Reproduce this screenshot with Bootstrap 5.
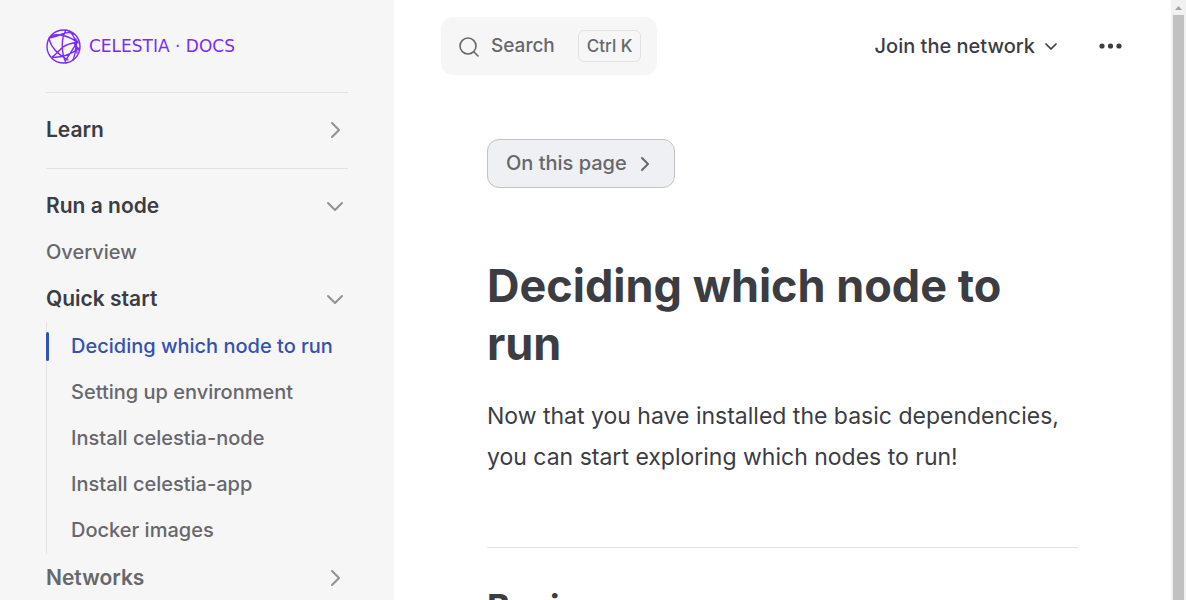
<!DOCTYPE html>
<html lang="en">
<head>
<meta charset="utf-8">
<meta name="viewport" content="width=device-width, initial-scale=1">
<title>Deciding which node to run | Celestia Docs</title>
<link href="https://cdn.jsdelivr.net/npm/bootstrap@5.3.0/dist/css/bootstrap.min.css" rel="stylesheet">
<style>
  body { font-family: Inter, "Liberation Sans", sans-serif; font-size: 20px; line-height: 28px; color: #3c3c43; background: #fff; }
  a, button { color: inherit; text-decoration: none; }
  svg { flex: none; fill: none; stroke: currentColor; stroke-linecap: round; stroke-linejoin: round; }
  .filled { fill: currentColor; stroke: none; }
  .soft { color: #67676c; }
  .sidebar { flex: 0 0 394px; padding: 0 46px; background: #f6f6f7; }
  .brand-link { height: 92px; gap: 8px; color: #7b2bf9; }
  .wordmark { font-family: "DejaVu Sans", sans-serif; font-size: 17px; }
  .group { border-top: 1px solid #e2e2e3; padding: 13px 0 15px; }
  .side-row { height: 47px; font-weight: 500; }
  .side-row.title { font-size: 21px; font-weight: 600; }
  .side-row.inner { height: 46px; }
  .side-row svg { color: #929295; margin-right: 3px; }
  .sub-list { border-left: 1px solid #e2e2e3; padding: 1px 0; }
  .sub-list a { height: 46px; padding-left: 24px; font-weight: 500; white-space: nowrap; }
  .sub-list a.active { color: #3451b2; }
  .sub-list a.active::before { content: ""; position: absolute; left: -1px; top: 9px; bottom: 8px; width: 3px; border-radius: 2px; background: #3451b2; }
  .topbar { height: 92px; padding: 0 48px 0 47px; }
  .search-btn { height: 58px; padding: 0 16px 0 18px; border-radius: 12px; background: #f6f6f7; font-size: 19px; font-weight: 500; }
  .search-btn kbd { height: 32px; padding: 0 8px; border: 1px solid #e2e2e3; border-radius: 6px; background: none; color: inherit; font: 500 17px/30px Inter, sans-serif; margin-left: 23px; }
  .more-btn { margin-left: 40px; }
  .article { padding: 47px 93px 0; }
  .outline-btn { height: 49px; padding: 0 24px 2px 18px; gap: 13px; border: 1px solid #c2c2c4; border-radius: 12px; background: #eff0f3; font-weight: 500; }
  h1 { font-size: 45px; line-height: 58px; font-weight: 700; margin: 69px 0 23px; }
  .article p { font-size: 23px; line-height: 41px; margin: 0; }
  h2 { font-size: 35px; line-height: 46px; font-weight: 700; border-top: 1px solid #e2e2e3; margin: 69px 0 0; padding-top: 36px; }
  .scroll-track { flex: 0 0 15px; background: #f1f1f1; padding: 0 2px; color: #a3a3a3; }
  .scroll-track svg { display: block; margin: 0 auto; }
  .scroll-thumb { background: #c1c1c1; }
</style>
</head>
<body>
<div class="d-flex vh-100 overflow-hidden">
  <aside class="sidebar overflow-hidden">
    <a href="#" class="brand-link d-flex align-items-center">
      <svg width="35" height="35" viewBox="0 0 35 35" stroke-width="1.4" aria-hidden="true">
        <circle cx="17.500" cy="17.500" r="16.500"/>
        <path d="M5 7C12 4 24 7 32 14M20 1C15 9 15 23 20 34M3 10C5 18 11 25 22 31M6 28C11 25 13 21 17 18C21 15 26 14 32 13M3 9C9 8 14 6 19 4C23 3 26 4 28 5M6 28C14 29 25 26 33 19M23 2C30 8 32 18 27 31M31 12C29 18 24 24 20 31M28 14L33 21M30 10L31 24"/>
      </svg>
      <span class="wordmark text-nowrap">CELESTIA · DOCS</span>
    </a>
    <nav aria-label="Sidebar">
      <section class="group">
        <button class="side-row title d-flex align-items-center justify-content-between w-100 border-0 bg-transparent p-0">Learn
          <svg width="20" height="20" viewBox="0 0 20 20" stroke-width="2"><path d="M7 3l7 7-7 7"/></svg></button>
      </section>
      <section class="group">
        <button class="side-row title d-flex align-items-center justify-content-between w-100 border-0 bg-transparent p-0">Run a node
          <svg width="20" height="20" viewBox="0 0 20 20" stroke-width="2"><path d="M3 7l7 7 7-7"/></svg></button>
        <a href="#" class="side-row inner soft d-flex align-items-center">Overview</a>
        <button class="side-row title d-flex align-items-center justify-content-between w-100 border-0 bg-transparent p-0">Quick start
          <svg width="20" height="20" viewBox="0 0 20 20" stroke-width="2"><path d="M3 7l7 7 7-7"/></svg></button>
        <ul class="sub-list list-unstyled m-0 soft">
          <li><a href="#" class="active position-relative d-flex align-items-center">Deciding which node to run</a></li>
          <li><a href="#" class="d-flex align-items-center">Setting up environment</a></li>
          <li><a href="#" class="d-flex align-items-center">Install celestia-node</a></li>
          <li><a href="#" class="d-flex align-items-center">Install celestia-app</a></li>
          <li><a href="#" class="d-flex align-items-center">Docker images</a></li>
        </ul>
        <button class="side-row title soft d-flex align-items-center justify-content-between w-100 border-0 bg-transparent p-0">Networks
          <svg width="20" height="20" viewBox="0 0 20 20" stroke-width="2"><path d="M7 3l7 7-7 7"/></svg></button>
      </section>
    </nav>
  </aside>

  <main class="flex-grow-1 overflow-hidden">
    <header class="topbar d-flex align-items-center justify-content-between">
      <button class="search-btn soft d-flex align-items-center border-0">
        <svg class="me-2" width="24" height="24" viewBox="0 0 24 24" stroke-width="1.6"><circle cx="9" cy="12" r="8"/><path d="M15 18l4 4"/></svg>
        Search <kbd>Ctrl K</kbd>
      </button>
      <div class="d-flex align-items-center">
        <button class="d-flex align-items-center border-0 bg-transparent p-0 fw-medium">Join the network
          <svg class="ms-2" width="16" height="16" viewBox="0 0 16 16" stroke-width="1.7"><path d="M3 6l5 5 5-5"/></svg></button>
        <button class="more-btn d-flex border-0 bg-transparent p-0" aria-label="More">
          <svg class="filled" width="24" height="24" viewBox="0 0 24 24"><circle cx="3" cy="12" r="2.600"/><circle cx="11.500" cy="12" r="2.600"/><circle cx="20" cy="12" r="2.600"/></svg></button>
      </div>
    </header>
    <article class="article">
      <button class="outline-btn soft d-flex align-items-center">On this page
        <svg width="10" height="16" viewBox="0 0 10 16" stroke-width="2"><path d="M2 3l6 6-6 6"/></svg></button>
      <h1>Deciding which node to run</h1>
      <p>Now that you have installed the basic dependencies, you can start exploring which nodes to run!</p>
      <h2>Basics</h2>
    </article>
  </main>

  <div class="scroll-track d-flex flex-column" aria-hidden="true">
    <svg class="filled" width="11" height="15" viewBox="0 0 11 15"><path d="M2 10l3.500-4L9 10z"/></svg>
    <div class="scroll-thumb flex-grow-1"></div>
  </div>
</div>
<script src="https://cdn.jsdelivr.net/npm/bootstrap@5.3.0/dist/js/bootstrap.bundle.min.js"></script>
</body>
</html>
